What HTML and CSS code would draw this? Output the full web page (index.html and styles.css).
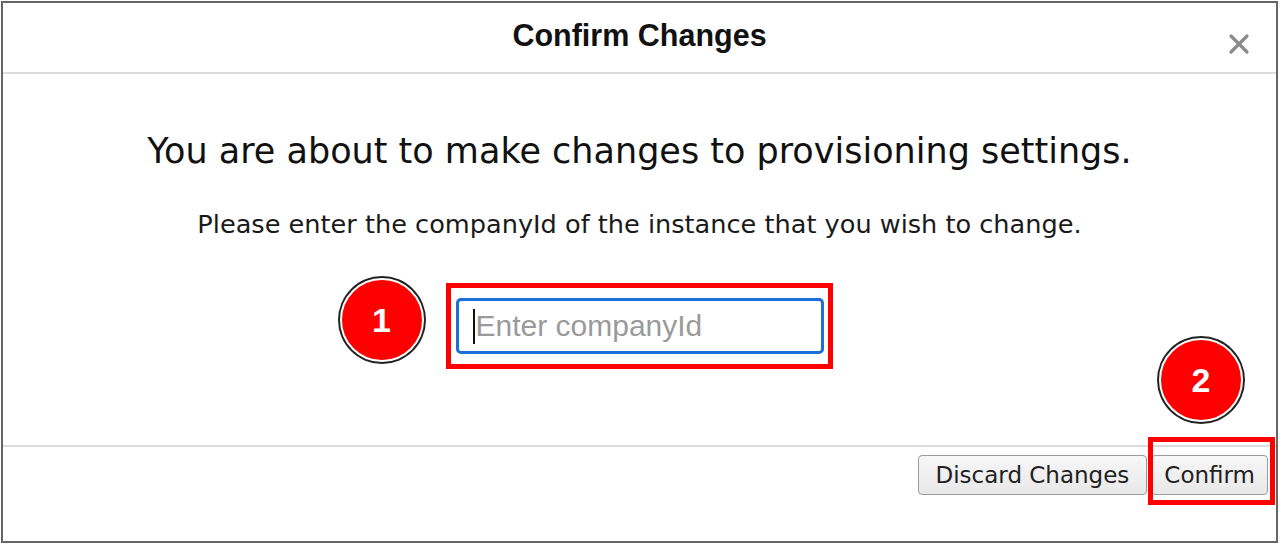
FILE: index.html
```html
<!DOCTYPE html>
<html>
<head>
<meta charset="utf-8">
<link rel="stylesheet" href="styles.css">
</head>
<body>
<div class="dialog">
  <div class="header">
    <div class="title">Confirm Changes</div>
    <div class="close">
      <svg width="22" height="22" viewBox="0 0 22 22"><path d="M3 3 L19 19 M19 3 L3 19" stroke="#8a8a8a" stroke-width="3.2" stroke-linecap="round"/></svg>
    </div>
  </div>
  <div class="content">
    <div class="heading">You are about to make changes to provisioning settings.</div>
    <div class="sub">Please enter the companyId of the instance that you wish to change.</div>
    <div class="mark-box">
      <div class="badge badge-one">1</div>
      <div class="field"><span class="caret"></span><span class="placeholder">Enter companyId</span></div>
    </div>
  </div>
  <div class="footer">
    <div class="badge badge-two">2</div>
    <button class="btn">Discard Changes</button>
    <div class="confirm-wrap">
      <button class="btn btn-confirm">Confirm</button>
      <div class="mark-outline"></div>
    </div>
  </div>
</div>
</body>
</html>
```

FILE: styles.css
```css
html, body {
  margin: 0;
  padding: 0;
  background: #ffffff;
}
body {
  font-family: "DejaVu Sans", Verdana, sans-serif;
  color: #1a1a1a;
}
.dialog {
  margin: 1px 2px 0 1px;
  height: 542px;
  box-sizing: border-box;
  border: 2px solid #666666;
  display: flex;
  flex-direction: column;
  position: relative;
}
.header {
  height: 69px;
  border-bottom: 2px solid #dcdcdc;
  display: flex;
  align-items: center;
  justify-content: center;
  position: relative;
}
.title {
  font-family: "Liberation Sans", Arial, sans-serif;
  font-weight: bold;
  font-size: 30.5px;
  color: #111111;
  margin-top: -5px;
}
.close {
  position: absolute;
  right: 26px;
  top: 30px;
  width: 22px;
  height: 22px;
}
.close svg { display: block; }
.content {
  height: 371px;
  display: flex;
  flex-direction: column;
  align-items: center;
}
.heading {
  font-size: 35px;
  margin-top: 57px;
  line-height: 40px;
  color: #111;
}
.sub {
  font-size: 25.6px;
  margin-top: 38px;
  line-height: 30px;
  color: #1a1a1a;
}
.mark-box {
  margin-top: 44px;
  margin-right: 1px;
  border: 5px solid #ff0000;
  padding: 10px 4px 10px 5px;
  position: relative;
}
.field {
  height: 50px;
  border: 3px solid #1b6fd6;
  border-radius: 5px;
  display: flex;
  align-items: center;
  padding-left: 14px;
  width: 348px;
}
.caret {
  width: 2px;
  height: 35px;
  background: #111;
}
.placeholder {
  font-family: "Liberation Sans", Arial, sans-serif;
  font-size: 30px;
  color: #9a9a9a;
  margin-left: 1px;
}
.badge {
  position: absolute;
  width: 84px;
  height: 84px;
  box-sizing: border-box;
  border-radius: 50%;
  background: #ff0000;
  border: 2px solid #ffffff;
  box-shadow: 0 0 0 2px #222222;
  color: #ffffff;
  font-family: "Liberation Sans", Arial, sans-serif;
  font-weight: bold;
  font-size: 34px;
  display: flex;
  align-items: center;
  justify-content: center;
}
.badge-one {
  left: -111px;
  top: -10px;
}
.badge-two {
  left: 1156px;
  top: -109px;
}
.footer {
  flex: 1;
  border-top: 2px solid #dcdcdc;
  display: flex;
  justify-content: flex-end;
  align-items: flex-start;
  padding: 8px 8px 0 0;
  gap: 4px;
  position: relative;
}
.btn {
  font-family: "DejaVu Sans", Verdana, sans-serif;
  font-size: 23px;
  color: #222;
  background: linear-gradient(#f7f7f7, #e8e8e8);
  border: 1px solid #9a9a9a;
  border-radius: 4px;
  height: 40px;
  padding: 0 17px;
  margin: 0;
}
.confirm-wrap {
  position: relative;
}
.btn-confirm {
  padding: 0 12px;
}
.mark-outline {
  position: absolute;
  left: -3px;
  top: -18px;
  right: -7px;
  bottom: -10px;
  border: 5px solid #ff0000;
}
```
